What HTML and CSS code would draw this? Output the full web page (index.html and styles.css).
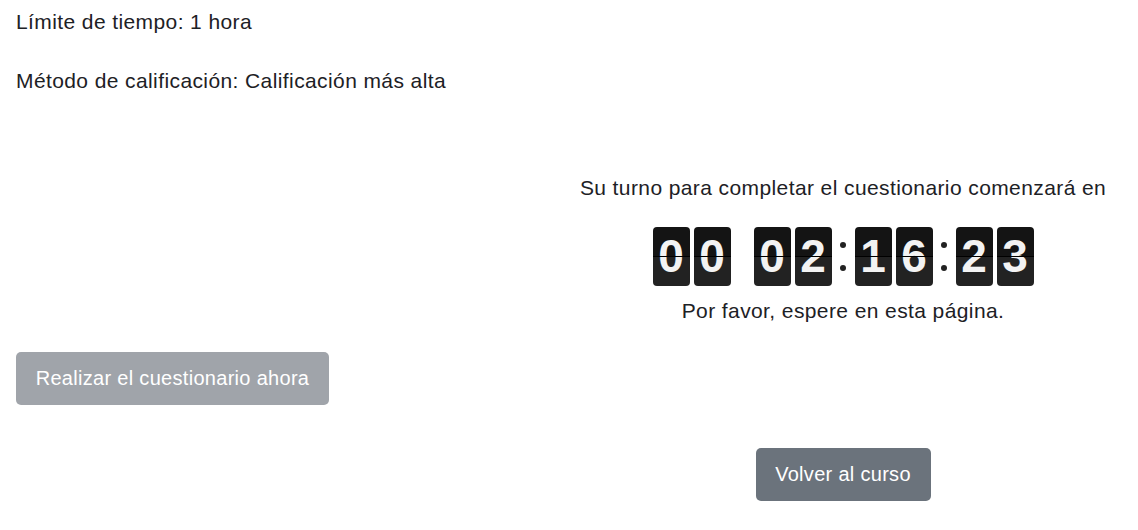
FILE: index.html
```html
<!DOCTYPE html>
<html lang="es">
<head>
<meta charset="utf-8">
<title>Cuestionario</title>
<link rel="stylesheet" href="styles.css">
</head>
<body>
<main class="page">
  <section class="info">
    <p class="info-line">Límite de tiempo: 1 hora</p>
    <p class="info-line">Método de calificación: Calificación más alta</p>
  </section>

  <section class="wait">
    <p class="wait-title">Su turno para completar el cuestionario comenzará en</p>
    <div class="clock">
      <div class="group">
        <span class="digit">0</span><span class="digit">0</span>
      </div>
      <span class="sep"></span>
      <div class="group">
        <span class="digit">0</span><span class="digit">2</span>
      </div>
      <span class="sep colon"><i></i><i></i></span>
      <div class="group">
        <span class="digit">1</span><span class="digit">6</span>
      </div>
      <span class="sep colon"><i></i><i></i></span>
      <div class="group">
        <span class="digit">2</span><span class="digit">3</span>
      </div>
    </div>
    <p class="wait-note">Por favor, espere en esta página.</p>
  </section>

  <div class="start">
    <button class="btn btn-disabled" disabled>Realizar el cuestionario ahora</button>
  </div>

  <div class="back">
    <button class="btn btn-secondary">Volver al curso</button>
  </div>
</main>
</body>
</html>
```

FILE: styles.css
```css
html, body {
  margin: 0;
  padding: 0;
  background: #ffffff;
}

body {
  font-family: "Liberation Sans", Arial, sans-serif;
  font-size: 21px;
  color: #1d2125;
  letter-spacing: 0.4px;
}

.page {
  padding: 7px 16px 0 16px;
}

.info-line {
  margin: 0 0 29px 0;
  line-height: 30px;
}

.info-line:last-child {
  margin-bottom: 0;
}

.info {
  margin-bottom: 77px;
}

.wait {
  width: 590px;
  margin-left: auto;
  margin-right: -16px;
  text-align: center;
}

.wait-title {
  margin: 0;
  line-height: 30px;
}

.wait-note {
  margin: 0;
  line-height: 30px;
  padding-top: 10px;
}

.clock {
  margin-top: 24px;
  display: flex;
  justify-content: center;
  align-items: center;
  height: 59px;
}

.group {
  display: flex;
  gap: 4px;
}

.digit {
  position: relative;
  width: 37px;
  height: 59px;
  border-radius: 4px;
  background: linear-gradient(#141414 0, #141414 50%, #222222 50%, #222222 100%);
  color: #f3f3f3;
  font-family: "Liberation Sans", Arial, sans-serif;
  font-weight: bold;
  font-size: 46px;
  letter-spacing: 0;
  line-height: 59px;
  text-align: center;
  overflow: hidden;
}

.digit::after {
  content: "";
  position: absolute;
  left: 0;
  right: 0;
  top: 29px;
  height: 1px;
  background: #000000;
}

.sep {
  width: 23px;
  height: 59px;
}

.colon {
  display: flex;
  flex-direction: column;
  align-items: center;
  justify-content: center;
  gap: 17px;
}

.colon i {
  display: block;
  width: 6px;
  height: 6px;
  border-radius: 50%;
  background: #222222;
}

.start {
  margin-top: 26px;
}

.btn {
  font-family: "Liberation Sans", Arial, sans-serif;
  font-size: 20px;
  letter-spacing: 0.3px;
  color: #ffffff;
  border: none;
  border-radius: 5px;
  height: 53px;
  line-height: 53px;
}

.btn-disabled {
  background: #a0a4aa;
  width: 313px;
  padding: 0;
}

.btn-secondary {
  background: #6b737c;
  width: 175px;
  padding: 0;
}

.back {
  width: 590px;
  margin-left: auto;
  margin-right: -16px;
  margin-top: 43px;
  text-align: center;
}
```
